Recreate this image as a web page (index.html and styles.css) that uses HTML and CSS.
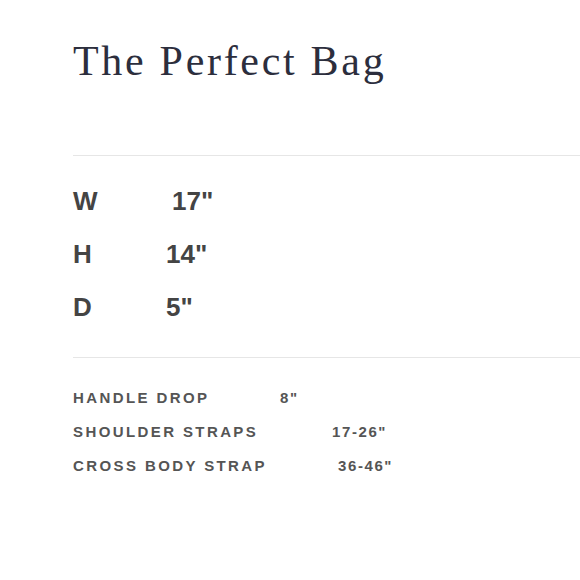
FILE: index.html
```html
<!DOCTYPE html>
<html>
<head>
<meta charset="utf-8">
<link rel="stylesheet" href="styles.css">
</head>
<body>
<div class="page">
  <h1 class="title">The Perfect Bag</h1>
  <div class="rule"></div>
  <div class="dims">
    <div class="dim"><span class="dim-key">W</span><span class="dim-val dim-val--shift">17"</span></div>
    <div class="dim"><span class="dim-key">H</span><span class="dim-val">14"</span></div>
    <div class="dim"><span class="dim-key">D</span><span class="dim-val">5"</span></div>
  </div>
  <div class="rule rule--second"></div>
  <div class="specs">
    <div class="spec"><span class="spec-key spec-key--handle">HANDLE DROP</span><span class="spec-val">8"</span></div>
    <div class="spec"><span class="spec-key spec-key--shoulder">SHOULDER STRAPS</span><span class="spec-val">17-26"</span></div>
    <div class="spec"><span class="spec-key spec-key--cross">CROSS BODY STRAP</span><span class="spec-val">36-46"</span></div>
  </div>
</div>
</body>
</html>
```
FILE: styles.css
```css
html, body {
  margin: 0;
  padding: 0;
  background: #ffffff;
}
.page {
  padding: 37px 0 0 73px;
}
.title {
  margin: 0;
  font-family: "Liberation Serif", "Times New Roman", serif;
  font-weight: normal;
  font-size: 42px;
  line-height: 48px;
  letter-spacing: 2.7px;
  color: #2c2e3d;
}
.rule {
  height: 1px;
  background: #e6e6e6;
  margin-top: 70px;
}
.rule--second {
  margin-top: 23px;
}
.dims {
  margin-top: 19px;
}
.dim {
  display: flex;
  height: 53px;
  line-height: 53px;
  font-family: "Liberation Sans", Arial, sans-serif;
  font-weight: bold;
  font-size: 26px;
  color: #444444;
}
.dim-key {
  width: 93px;
}
.dim-val--shift {
  padding-left: 6px;
}
.specs {
  margin-top: 23px;
}
.spec {
  display: flex;
  height: 34px;
  line-height: 34px;
  font-family: "Liberation Sans", Arial, sans-serif;
  font-weight: bold;
  font-size: 15px;
  letter-spacing: 2.4px;
  color: #555555;
}
.spec-key--handle { width: 207px; }
.spec-key--shoulder { width: 259px; }
.spec-key--cross { width: 265px; }
.spec-val {
  letter-spacing: 1.6px;
}
```
